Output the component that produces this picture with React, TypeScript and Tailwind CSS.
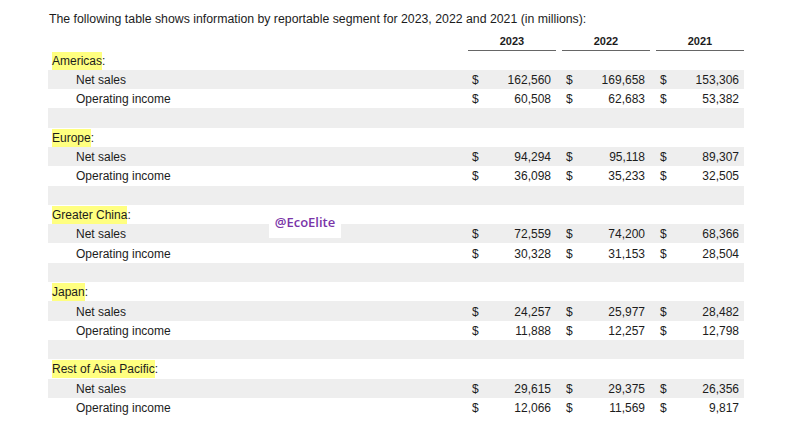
const years = ["2023", "2022", "2021"];

type Segment = {
  name: string;
  netSales: string[];
  operatingIncome: string[];
};

const segments: Segment[] = [
  { name: "Americas", netSales: ["162,560", "169,658", "153,306"], operatingIncome: ["60,508", "62,683", "53,382"] },
  { name: "Europe", netSales: ["94,294", "95,118", "89,307"], operatingIncome: ["36,098", "35,233", "32,505"] },
  { name: "Greater China", netSales: ["72,559", "74,200", "68,366"], operatingIncome: ["30,328", "31,153", "28,504"] },
  { name: "Japan", netSales: ["24,257", "25,977", "28,482"], operatingIncome: ["11,888", "12,257", "12,798"] },
  { name: "Rest of Asia Pacific", netSales: ["29,615", "29,375", "26,356"], operatingIncome: ["12,066", "11,569", "9,817"] },
];

function ValueCells({ values }: { values: string[] }) {
  return (
    <>
      {values.map((v, i) => (
        <div
          key={i}
          className={`flex justify-between pl-[4px] pr-[5px] ${i === 0 ? "w-[88px]" : "ml-[6px] w-[88px]"}`}
        >
          <span>$</span>
          <span>{v}</span>
        </div>
      ))}
    </>
  );
}

function Row({ shaded, children }: { shaded?: boolean; children: React.ReactNode }) {
  return (
    <div className={`flex h-[19.3px] items-center pt-[1px] ${shaded ? "bg-[#eeeeee]" : "bg-white"}`}>
      {children}
    </div>
  );
}

export default function App() {
  return (
    <div
      className="relative h-[432px] w-[800px] overflow-hidden bg-white text-[#1c1c1c]"
      style={{ fontFamily: '"Liberation Sans", Arial, sans-serif' }}
    >
      <p className="pl-[49px] pt-[11px] text-[12.3px] leading-[16px]">
        The following table shows information by reportable segment for 2023, 2022 and 2021 (in millions):
      </p>

      <div className="ml-[48px] w-[696px] text-[12px]">
        {/* header */}
        <div className="mt-[7px] flex h-[16.5px]">
          <div className="w-[420px]" />
          {years.map((y, i) => (
            <div
              key={y}
              className={`w-[88px] border-b-[1.5px] border-[#666666] pt-[1px] text-center text-[11px] font-bold leading-[13px] ${i === 0 ? "" : "ml-[6px]"}`}
            >
              {y}
            </div>
          ))}
        </div>

        {segments.map((s, idx) => (
          <div key={s.name}>
            <Row>
              <div className="w-[420px] pl-[4px]">
                <span className="bg-[#ffff80] py-[2px]">{s.name}</span>:
              </div>
            </Row>
            <Row shaded>
              <div className="w-[420px] pl-[28px]">Net sales</div>
              <ValueCells values={s.netSales} />
            </Row>
            <Row>
              <div className="w-[420px] pl-[28px]">Operating income</div>
              <ValueCells values={s.operatingIncome} />
            </Row>
            {idx < segments.length - 1 && <Row shaded>{null}</Row>}
          </div>
        ))}
      </div>

      {/* watermark */}
      <div className="absolute left-[269px] top-[208px] flex h-[30px] w-[72px] items-center justify-center bg-white">
        <span
          className="text-[13px] font-semibold text-[#7a35a8]"
          style={{ fontFamily: '"Open Sans", sans-serif' }}
        >
          @EcoElite
        </span>
      </div>
    </div>
  );
}
